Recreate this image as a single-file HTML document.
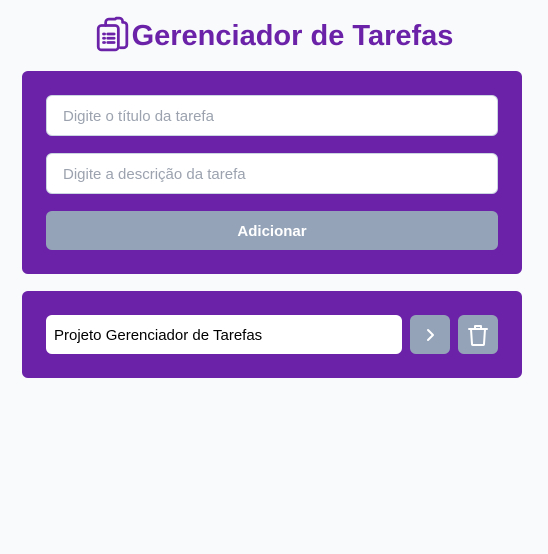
<!DOCTYPE html>
<html><head><style>
body{margin:0;background:#f8fafc;font-family:"Liberation Sans",sans-serif;width:548px;height:554px;overflow:hidden;position:relative}
.t{position:absolute;top:16px;left:0;width:548px;text-align:center;color:#6b21a8;font-weight:bold;font-size:29px;line-height:40px}
.t svg{vertical-align:-7px;margin-right:3px}
.card{position:absolute;left:22px;width:500px;background:#6b21a8;border-radius:6px}
.in{position:absolute;left:24px;width:452px;height:41px;background:#fff;border:1px solid #cbd5e1;border-radius:6px;box-sizing:border-box;color:#9ca3af;font-size:15px;line-height:42px;padding-left:16px}
.btn{position:absolute;left:24px;width:452px;height:39px;top:140px;background:#94a3b8;border-radius:6px;color:#fff;font-weight:bold;font-size:15px;text-align:center;line-height:41px}
.sq{position:absolute;top:24px;width:40px;height:39px;background:#94a3b8;border-radius:6px;display:flex;align-items:center;justify-content:center}
</style></head><body>
<div class="t"><svg width="34" height="36" viewBox="0 0 32 34" fill="none" stroke="#6b21a8" stroke-width="2.6" stroke-linecap="round" stroke-linejoin="round"><rect x="3" y="9" width="19" height="23" rx="3"/><path d="M10 9V6a3 3 0 0 1 3-3h6l1-1h3a3 3 0 0 1 3 3v1h1a3 3 0 0 1 3 3v18a3 3 0 0 1-3 3h-3"/><path d="M8 17h1M8 21h1M8 25h1M12 17h6M12 21h6M12 25h6"/></svg>Gerenciador de Tarefas</div>
<div class="card" style="top:71px;height:203px">
<div class="in" style="top:24px">Digite o título da tarefa</div>
<div class="in" style="top:82px">Digite a descrição da tarefa</div>
<div class="btn">Adicionar</div>
</div>
<div class="card" style="top:291px;height:87px">
<div class="in" style="top:24px;width:356px;height:39px;border:none;color:#000;font-size:15px;padding-left:8px;line-height:41px">Projeto Gerenciador de Tarefas</div>
<div class="sq" style="left:388px"><svg width="20" height="20" viewBox="0 0 20 20" fill="none" stroke="#fff" stroke-width="2" stroke-linecap="round" stroke-linejoin="round"><path d="M8 5l5 5-5 5"/></svg></div>
<div class="sq" style="left:436px"><svg width="22" height="24" viewBox="0 0 22 24" fill="none" stroke="#fff" stroke-width="2" stroke-linecap="round" stroke-linejoin="round"><path d="M2 6h18M8 6V3h6v3M4 6l1 15a1 1 0 0 0 1 1h10a1 1 0 0 0 1-1l1-15"/></svg></div>
</div>
</body></html>
